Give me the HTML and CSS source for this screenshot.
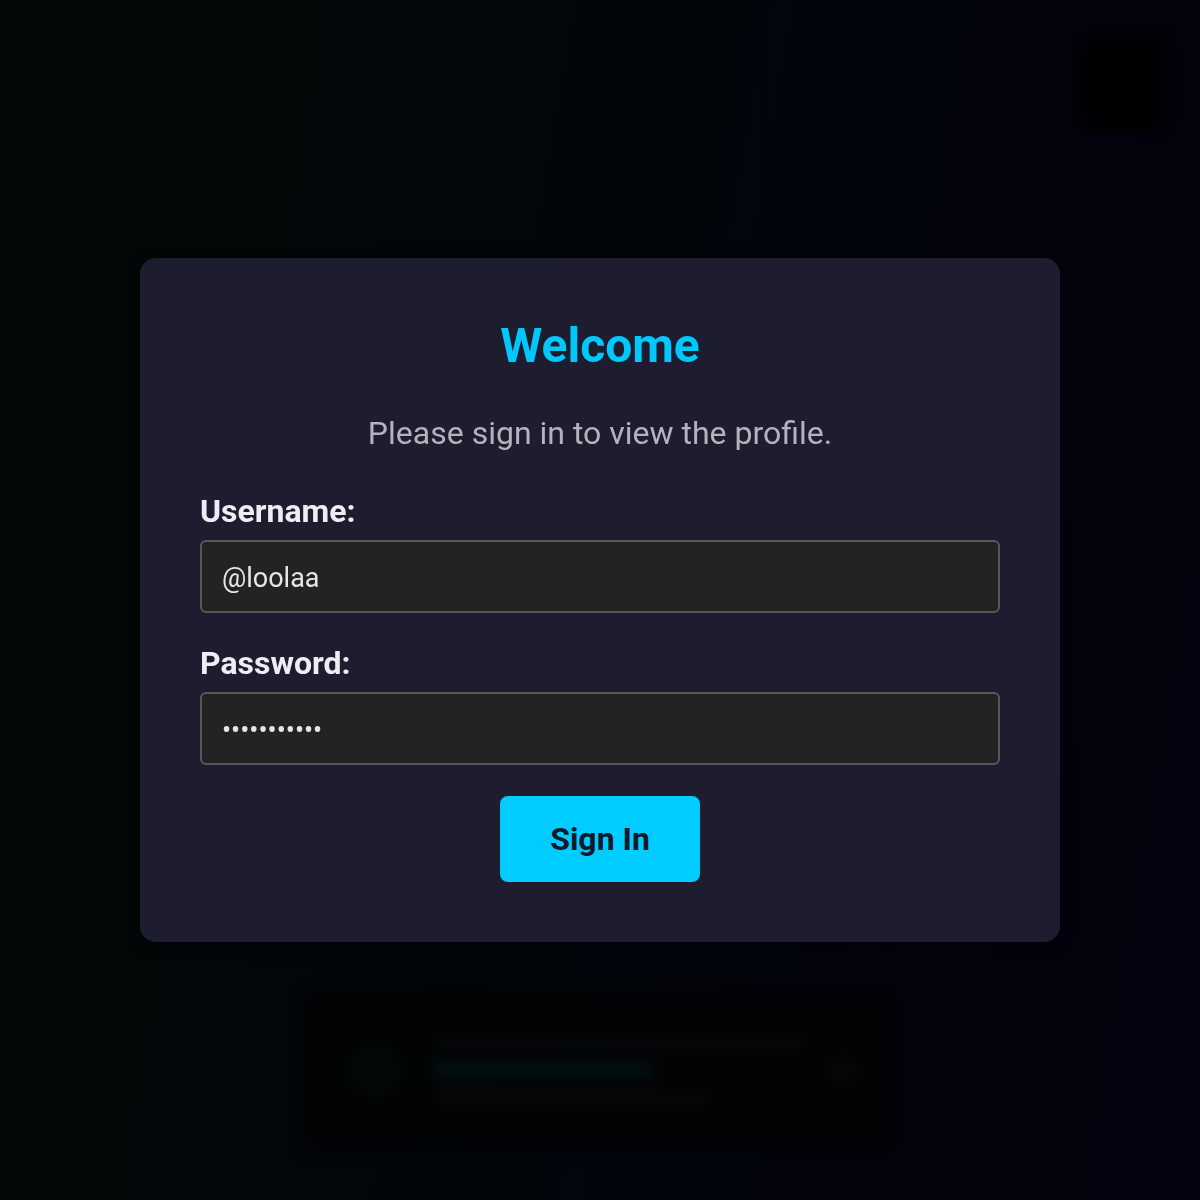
FILE: index.html
```html
<!DOCTYPE html>
<html lang="en">
<head>
<meta charset="utf-8">
<title>Sign in</title>
<link rel="stylesheet" href="styles.css">
</head>
<body>
  <div class="page">
    <header class="page-header">
      <div class="menu-btn"></div>
    </header>
    <main class="page-main">
      <div class="profile-card">
        <div class="pc-avatar"></div>
        <div class="pc-lines">
          <div class="pc-line long"></div>
          <div class="pc-line accent"></div>
          <div class="pc-line mid"></div>
        </div>
        <div class="pc-dot"></div>
      </div>
    </main>
  </div>

  <div class="overlay">
    <form class="login-card">
      <h1 class="title">Welcome</h1>
      <p class="subtitle">Please sign in to view the profile.</p>
      <label class="label" for="username">Username:</label>
      <input class="field" id="username" type="text" value="@loolaa">
      <label class="label pw-label" for="password">Password:</label>
      <input class="field pw-field" id="password" type="password" value="loolaa12345">
      <button class="btn" type="button">Sign In</button>
    </form>
  </div>
</body>
</html>
```

FILE: styles.css
```css
* { box-sizing: border-box; }

html, body {
  margin: 0;
  height: 100%;
}

body {
  font-family: Roboto, "Liberation Sans", sans-serif;
  background: linear-gradient(100deg, #020806 0%, #02060a 45%, #03020f 100%);
  overflow: hidden;
}

/* Underlying page (blurred behind the modal) */
.page {
  height: 100%;
  display: flex;
  flex-direction: column;
  filter: blur(8px);
  opacity: 0.9;
}

.page-header {
  display: flex;
  justify-content: flex-end;
  padding: 35px 35px 0 0;
}

.menu-btn {
  width: 86px;
  height: 95px;
  background: #000000;
  border-radius: 8px;
}

.page-main {
  flex: 1;
  display: flex;
  justify-content: center;
  align-items: flex-end;
  padding-bottom: 50px;
}

.profile-card {
  width: 590px;
  height: 160px;
  background: #010202;
  border-radius: 12px;
  display: flex;
  align-items: center;
  gap: 24px;
  padding: 0 40px;
}

.pc-avatar {
  width: 60px;
  height: 60px;
  border-radius: 50%;
  background: #050808;
}

.pc-lines {
  flex: 1;
  display: flex;
  flex-direction: column;
  gap: 14px;
}

.pc-line {
  height: 14px;
  border-radius: 7px;
  background: #080a0a;
}
.pc-line.long { width: 100%; }
.pc-line.accent { width: 60%; background: #05141a; }
.pc-line.mid { width: 75%; }

.pc-dot {
  width: 24px;
  height: 24px;
  border-radius: 4px;
  background: #0a0a0a;
}

/* Modal */
.overlay {
  position: fixed;
  inset: 0;
  display: flex;
  align-items: center;
  justify-content: center;
}

.login-card {
  width: 920px;
  height: 684px;
  background: #1e1d30;
  border-radius: 16px;
  padding: 60px;
  display: flex;
  flex-direction: column;
  box-shadow: 0 4px 16px rgba(0, 0, 0, 0.35);
}

.title {
  margin: 0;
  text-align: center;
  color: #00c8fa;
  font-size: 48px;
  font-weight: 700;
  line-height: 56px;
}

.subtitle {
  margin: 41px 0 0;
  text-align: center;
  color: #b3b3bc;
  font-size: 32px;
  line-height: 37px;
}

.label {
  margin-top: 41px;
  color: #ededf4;
  font-size: 32px;
  font-weight: 700;
  line-height: 37px;
}

.pw-label {
  margin-top: 32px;
}

.field {
  margin-top: 10px;
  width: 100%;
  height: 73px;
  background: #232323;
  border: 2px solid #585858;
  border-radius: 6px;
  padding: 2px 20px 0;
  color: #e6e6e6;
  font-family: Roboto, "Liberation Sans", sans-serif;
  font-size: 27px;
  outline: none;
}

.pw-field {
  margin-top: 10px;
}

.btn {
  margin: 31px auto 0;
  width: 200px;
  height: 86px;
  background: #00ccff;
  border: none;
  border-radius: 8px;
  color: #14192a;
  font-family: Roboto, "Liberation Sans", sans-serif;
  font-size: 32px;
  font-weight: 700;
}
```
